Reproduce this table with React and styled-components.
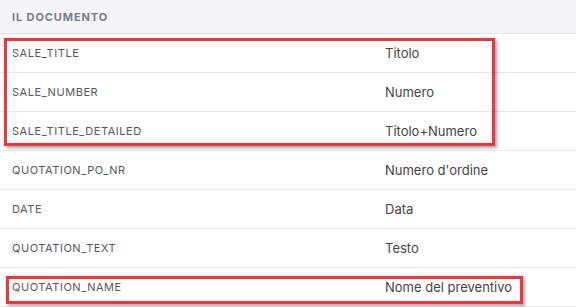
import React from 'react'
import styled, { createGlobalStyle } from 'styled-components'

const GlobalStyle = createGlobalStyle`
  html, body {
    margin: 0;
    padding: 0;
    background: #ffffff;
  }
  body {
    font-family: Inter, "Noto Sans", sans-serif;
  }
`

const Page = styled.div`
  position: relative;
  width: 576px;
  height: 307px;
  overflow: hidden;
  background: #ffffff;
`

const Header = styled.div`
  height: 34px;
  display: flex;
  align-items: center;
  padding-left: 12px;
  background-color: #f5f5f7;
  border-bottom: 1px solid #e4e4e7;
  box-sizing: border-box;
  font-size: 11px;
  font-weight: 700;
  letter-spacing: 0.9px;
  color: #7c7c84;
`

const Row = styled.div`
  height: 39px;
  display: grid;
  grid-template-columns: 373px 1fr;
  align-items: center;
  padding-left: 12px;
  border-bottom: 1px solid #e6e6e6;
  box-sizing: border-box;
`

const Key = styled.span`
  font-size: 11px;
  letter-spacing: 0.55px;
  color: #58585c;
`

const Value = styled.span`
  font-size: 13px;
  color: #444447;
`

const Highlight = styled.div`
  position: absolute;
  left: ${p => p.left}px;
  top: ${p => p.top}px;
  width: ${p => p.width}px;
  height: ${p => p.height}px;
  border: 3px solid #f2353b;
  box-sizing: border-box;
  box-shadow: 2px 2px 3px rgba(0, 0, 0, 0.35);
  pointer-events: none;
`

const rows = [
  ['SALE_TITLE', 'Titolo'],
  ['SALE_NUMBER', 'Numero'],
  ['SALE_TITLE_DETAILED', 'Titolo+Numero'],
  ['QUOTATION_PO_NR', "Numero d'ordine"],
  ['DATE', 'Data'],
  ['QUOTATION_TEXT', 'Testo'],
  ['QUOTATION_NAME', 'Nome del preventivo'],
]

const App = () => {
  return (
    <Page>
      <GlobalStyle />
      <Header>IL DOCUMENTO</Header>
      {rows.map(([key, value]) => (
        <Row key={key}>
          <Key>{key}</Key>
          <Value>{value}</Value>
        </Row>
      ))}
      <Highlight left={4} top={38} width={491} height={108} />
      <Highlight left={6} top={276} width={517} height={28} />
    </Page>
  )
}

export default App
